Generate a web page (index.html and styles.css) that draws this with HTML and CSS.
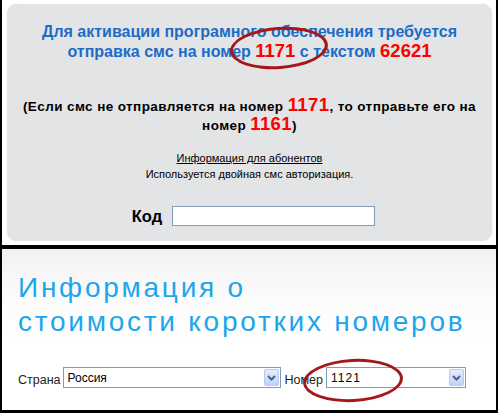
FILE: index.html
```html
<!DOCTYPE html>
<html lang="ru">
<head>
<meta charset="utf-8">
<link rel="stylesheet" href="styles.css">
</head>
<body>
<div class="page">
  <section class="top">
    <div class="panel">
      <p class="lead">Для активации програмного обеспечения требуется<br>отправка смс на номер <span class="num">1171</span> с текстом <span class="num">62621</span></p>
      <p class="note">(Если смс не отправляется на номер <span class="num">1171</span>, то отправьте его на<br>номер <span class="num">1161</span>)</p>
      <p class="info"><a href="#">Информация для абонентов</a></p>
      <p class="auth">Используется двойная смс авторизация.</p>
      <div class="code-row"><label>Код</label><span class="input"></span></div>
    </div>
    <span class="ring ring-top"></span>
  </section>
  <section class="bottom">
    <h1 class="title">Информация о<br>стоимости коротких номеров</h1>
    <div class="form-row">
      <span class="lbl">Страна</span>
      <div class="select sel-country"><span class="val">Россия</span><span class="arrow"><svg width="9" height="6" viewBox="0 0 9 6"><path d="M1 1 L4.5 4.5 L8 1" fill="none" stroke="#4d6185" stroke-width="2"/></svg></span></div>
      <span class="lbl">Номер</span>
      <div class="select sel-number"><span class="val">1121</span><span class="arrow"><svg width="9" height="6" viewBox="0 0 9 6"><path d="M1 1 L4.5 4.5 L8 1" fill="none" stroke="#4d6185" stroke-width="2"/></svg></span></div>
    </div>
    <span class="ring ring-bottom"></span>
  </section>
</div>
</body>
</html>
```
FILE: styles.css
```css
html, body {
  margin: 0;
  padding: 0;
  background: #fff;
}
.page {
  width: 498px;
  height: 413px;
  position: relative;
  font-family: "Liberation Sans", Arial, sans-serif;
}
.top {
  position: relative;
  height: 249px;
  box-sizing: border-box;
  padding: 4px 4px 4px 5px;
  border-left: 2px solid #000;
  border-right: 2px solid #000;
  border-bottom: 4px solid #000;
  background: #fff;
}
.panel {
  height: 237px;
  background: #e3e4e6;
  border-radius: 10px;
  box-shadow: 0 0 1px #cfd0d2;
  text-align: center;
  padding-top: 18px;
  box-sizing: border-box;
}
.panel p {
  margin: 0;
}
.lead {
  color: #1c6cc7;
  font-weight: bold;
  font-size: 16px;
  line-height: 19px;
}
.num {
  color: #ff0000;
  font-size: 18.5px;
  font-weight: bold;
}
.note {
  margin-top: 35px !important;
  font-weight: bold;
  font-size: 13.5px;
  line-height: 17px;
  letter-spacing: 0.4px;
  color: #000;
}
.info {
  margin-top: 17px !important;
  font-size: 11px;
  line-height: 14px;
}
.info a {
  color: #000;
  text-decoration: underline;
}
.auth {
  margin-top: 2px !important;
  font-size: 11px;
  line-height: 14px;
  color: #000;
}
.code-row {
  margin-top: 25px;
  display: flex;
  justify-content: center;
  align-items: center;
  gap: 10px;
  padding-left: 8px;
}
.code-row label {
  font-size: 16.5px;
  font-weight: bold;
  color: #000;
}
.input {
  display: block;
  width: 201px;
  height: 18px;
  background: #fff;
  border: 1px solid #7f9db9;
}
.ring {
  position: absolute;
  border: 3px solid #a61818;
  border-radius: 50%;
  box-sizing: border-box;
}
.ring-top {
  left: 228px;
  top: 27px;
  width: 98px;
  height: 42px;
  transform: rotate(-4deg);
}
.bottom {
  position: relative;
  height: 164px;
  box-sizing: border-box;
  border-left: 2px solid #000;
  border-right: 2px solid #000;
  border-bottom: 3px solid #000;
  background: linear-gradient(#f1f1f1, #fbfbfb 45px, #fff 90px);
  padding: 22px 0 0 16px;
}
.title {
  margin: 0;
  font-weight: normal;
  font-size: 28px;
  line-height: 34px;
  letter-spacing: 2.75px;
  color: #1ca6ec;
}
.form-row {
  margin-top: 28px;
  display: flex;
  align-items: center;
  font-size: 12px;
  color: #222;
}
.lbl {
  font-size: 12.5px;
  padding-top: 4px;
}
.select {
  box-sizing: border-box;
  height: 21px;
  border: 1px solid #7f9db9;
  background: #fff;
  display: flex;
  align-items: center;
  justify-content: space-between;
  padding: 0 1px 0 4px;
  font-size: 12px;
  color: #000;
}
.sel-country {
  width: 218px;
  margin-left: 2px;
  margin-right: 4px;
}
.sel-number {
  width: 140px;
  margin-left: 3px;
}
.sel-number .val {
  letter-spacing: 1px;
}
.arrow {
  width: 15px;
  height: 17px;
  box-sizing: border-box;
  border: 1px solid #b9c9ef;
  border-radius: 2px;
  background: linear-gradient(#e1eafe, #c0d3fb);
  display: flex;
  align-items: center;
  justify-content: center;
}
.ring-bottom {
  left: 301px;
  top: 110px;
  width: 100px;
  height: 43px;
  transform: rotate(-3deg);
}
```
